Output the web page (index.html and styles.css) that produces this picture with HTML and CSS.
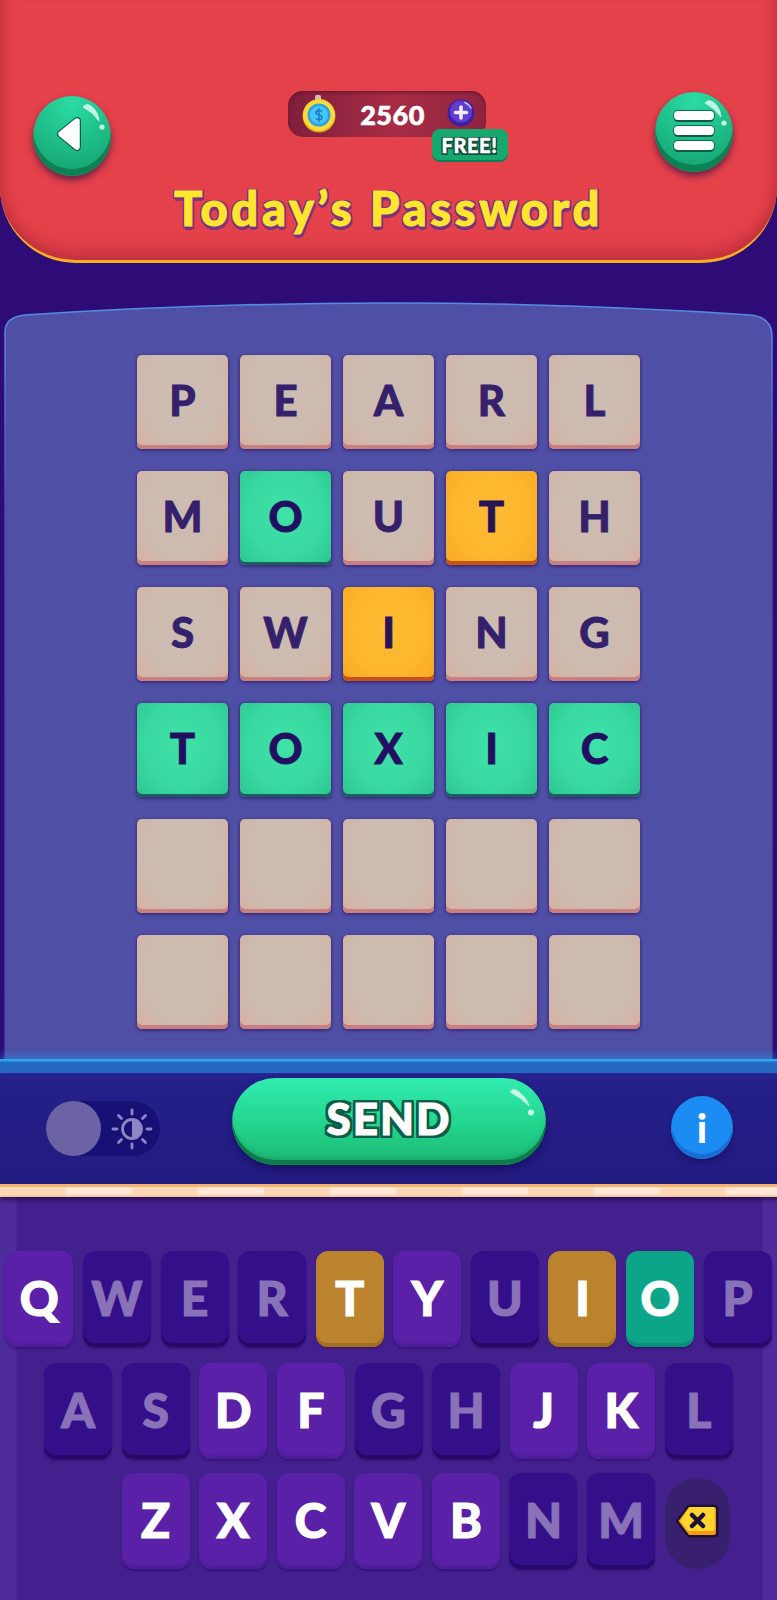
FILE: index.html
```html
<!DOCTYPE html>
<html lang="en">
<head>
<meta charset="utf-8">
<title>Today's Password</title>
<link rel="stylesheet" href="styles.css">
</head>
<body>
<div class="app">
  <header class="header">
    <div class="header-row">
      <button class="round-btn back">
        <svg class="shine" viewBox="0 0 78 78"><path d="M50 11 Q53 7 58 10 Q65 15 66 25 Q60 16 50 11Z" fill="#c4f5e4" stroke="#c4f5e4" stroke-linejoin="round"/><circle cx="69" cy="31" r="2.600" fill="#c4f5e4"/></svg>
        <svg class="shine" viewBox="0 0 78 78"><path d="M44 25 L28 38 L44 51 Z" fill="#fff" stroke="#0f5f4c" stroke-width="8" stroke-linejoin="round"/><path d="M44 25 L28 38 L44 51 Z" fill="#fff" stroke="#fff" stroke-width="5.500" stroke-linejoin="round"/></svg>
      </button>
      <div class="coins">
        <svg class="coin" viewBox="0 0 34 38" width="34" height="38"><rect x="13" y="0" width="6" height="5" rx="1.500" fill="#d9b9b0"/><circle cx="17" cy="21" r="16.500" fill="#d9a512"/><circle cx="17" cy="20" r="16" fill="#ffd83a"/><circle cx="17" cy="20" r="11.500" fill="#2fa4e4"/><circle cx="17" cy="20" r="9" fill="#46c6f6"/><path d="M20 16.500c-2-1.500-6-1.200-6 1.200 0 3 6 1.800 6 4.700 0 2.500-4 2.600-6.300 1.200M17 13v14" fill="none" stroke="#1b7fc4" stroke-width="1.600"/></svg>
        <span class="coin-count">2560</span>
        <svg class="plus" viewBox="0 0 28 28" width="28" height="28"><circle cx="14" cy="14" r="13.500" fill="#3f1fa6"/><circle cx="14" cy="12.500" r="11" fill="#5f3ed0"/><path d="M14 8v11M8.500 13.500h11" stroke="#f2eeff" stroke-width="3.500" stroke-linecap="round"/><path d="M18 3.500 Q22 5 24 9" fill="none" stroke="#cfc4f5" stroke-width="1.500" stroke-linecap="round"/></svg>
        <span class="free">FREE!</span>
      </div>
      <button class="round-btn menu">
        <svg class="shine" viewBox="0 0 78 78"><path d="M50 11 Q53 7 58 10 Q65 15 66 25 Q60 16 50 11Z" fill="#c4f5e4" stroke="#c4f5e4" stroke-linejoin="round"/><circle cx="69" cy="31" r="2.600" fill="#c4f5e4"/></svg>
        <span class="bars"><i></i><i></i><i></i></span>
      </button>
    </div>
    <h1 class="title">Today’s Password</h1>
  </header>

  <main class="board">
    <svg class="board-bg" viewBox="0 0 777 770" preserveAspectRatio="none">
      <defs><linearGradient id="edge" gradientUnits="userSpaceOnUse" x1="0" y1="0" x2="0" y2="770"><stop offset="0" stop-color="#4f93e6"/><stop offset=".08" stop-color="#5a7fd8"/><stop offset=".3" stop-color="#4a4a9e"/><stop offset="1" stop-color="#474795"/></linearGradient></defs>
      <path d="M5 770 V42 Q5 27 25 25 Q390 1 750 25 Q772 27 772 46 V770" fill="#4f4fa5" stroke="url(#edge)" stroke-width="1.500"/>
    </svg>
    <div class="grid">
      <div class="tile">P</div><div class="tile">E</div><div class="tile">A</div><div class="tile">R</div><div class="tile">L</div>
      <div class="tile">M</div><div class="tile green">O</div><div class="tile">U</div><div class="tile orange">T</div><div class="tile">H</div>
      <div class="tile">S</div><div class="tile">W</div><div class="tile orange">I</div><div class="tile">N</div><div class="tile">G</div>
      <div class="tile green">T</div><div class="tile green">O</div><div class="tile green">X</div><div class="tile green">I</div><div class="tile green">C</div>
      <div class="tile"></div><div class="tile"></div><div class="tile"></div><div class="tile"></div><div class="tile"></div>
      <div class="tile"></div><div class="tile"></div><div class="tile"></div><div class="tile"></div><div class="tile"></div>
    </div>
  </main>

  <section class="actions">
    <div class="toggle">
      <span class="knob"></span>
      <svg class="sun" viewBox="0 0 42 42" width="42" height="42"><g stroke="#8d87c4" stroke-width="2.800" stroke-linecap="round"><path d="M21 2v4M21 36v4M2 21h4M36 21h4M7.500 7.500l3 3M31.500 31.500l3 3M7.500 34.500l3-3M31.500 10.500l3-3"/></g><circle cx="21" cy="21" r="9.500" fill="none" stroke="#8d87c4" stroke-width="2.800"/><path d="M21 11.500a9.500 9.500 0 0 1 0 19z" fill="#8d87c4"/></svg>
    </div>
    <button class="send">
      <span class="send-label">SEND</span>
      <svg class="send-shine" viewBox="0 0 26 28" width="26" height="28"><path d="M1 4 Q3 0 7 2 Q17 8 20 18 Q13 10 1 4Z" fill="#c8f8e8" stroke="#c8f8e8" stroke-linejoin="round"/><circle cx="22" cy="24.500" r="3" fill="#c8f8e8"/></svg>
    </button>
    <button class="info">i</button>
  </section>

  <div class="strip"></div>

  <section class="keyboard">
    <div class="row">
      <div class="key lit">Q</div><div class="key off">W</div><div class="key off">E</div><div class="key off">R</div><div class="key amber">T</div><div class="key lit">Y</div><div class="key off">U</div><div class="key amber">I</div><div class="key teal">O</div><div class="key off">P</div>
    </div>
    <div class="row">
      <div class="key off">A</div><div class="key off">S</div><div class="key lit">D</div><div class="key lit">F</div><div class="key off">G</div><div class="key off">H</div><div class="key lit">J</div><div class="key lit">K</div><div class="key off">L</div>
    </div>
    <div class="row row-last">
      <div class="key lit">Z</div><div class="key lit">X</div><div class="key lit">C</div><div class="key lit">V</div><div class="key lit">B</div><div class="key off">N</div><div class="key off">M</div>
      <div class="del">
        <svg viewBox="0 0 44 34" width="44" height="34"><path d="M13 1 H40 Q43 1 43 4 V30 Q43 33 40 33 H13 L1 17 Z" fill="#1d1236" stroke="#1d1236" stroke-linejoin="round"/><path d="M14 3 H39 Q41 3 41 5 V29 Q41 31 39 31 H14 L3.500 17 Z" fill="#f59a16"/><path d="M14.500 3 H38 Q39.500 3 39.500 5 V25 Q39.500 27 37.500 27 H13 L5 17 Z" fill="#ffd530"/><path d="M17 11 L28 22 M28 11 L17 22" stroke="#1d1236" stroke-width="4.500" stroke-linecap="round"/></svg>
      </div>
    </div>
  </section>
</div>
</body>
</html>
```
FILE: styles.css
```css
* { box-sizing: border-box; margin: 0; padding: 0; }
html, body { width: 777px; height: 1600px; overflow: hidden; }
body { background: #2e0c78; font-family: Lato, "Open Sans", sans-serif; }
button { border: 0; background: none; font-family: inherit; }
.app { width: 777px; height: 1600px; display: flex; flex-direction: column; }

.header {
  height: 263px; padding: 92px 44px 0 33px; flex: none;
  background: #e5414a;
  border-bottom: 3px solid #f8b020;
  border-radius: 0 0 76px 76px;
  box-shadow: inset 0 -20px 20px -14px rgba(120, 20, 40, .4), inset 14px 0 14px -12px rgba(120, 20, 40, .3), inset -14px 0 14px -12px rgba(120, 20, 40, .3);
  position: relative;
}
.header-row { display: flex; justify-content: space-between; align-items: flex-start; }
.round-btn {
  position: relative; width: 78px; height: 80px; border-radius: 50%; flex: none;
  background: radial-gradient(circle at 50% 10%, #2bdca4 0, #1fc08a 45%, #18a878 80%);
  box-shadow: inset 0 -7px 0 #0c8152, 0 4px 7px rgba(60, 20, 70, .75);
  display: flex; align-items: center; justify-content: center;
}
.shine { position: absolute; left: 0; top: 0; width: 78px; height: 78px; }
.back { margin-top: 4px; }
.bars { display: flex; flex-direction: column; gap: 6px; margin-top: -3px; }
.bars i { display: block; width: 40px; height: 9px; background: #fff; border-radius: 4px; box-shadow: 0 2px 0 #0d5a45, 0 0 0 1px #0e6a50; }

.coins {
  position: relative; width: 198px; height: 46px; margin-left: 7px; margin-top: -1px;
  display: flex; align-items: center;
  background: linear-gradient(90deg, #7f1f3d, #a82c45 55%, #8e2440);
  box-shadow: inset 0 2px 3px rgba(90, 15, 40, .6);
  border-radius: 15px;
  padding-left: 14px;
}
.coin { flex: none; margin-top: -1px; }
.coin-count { width: 110px; margin-left: 2px; text-align: center; color: #fff; font-size: 27px; font-weight: 900; letter-spacing: .5px; -webkit-text-stroke: .6px #fff; }
.plus { flex: none; margin-top: -2px; margin-left: -1px; }
.free {
  position: absolute; left: 144px; top: 38px; width: 76px; height: 31px;
  display: flex; align-items: center; justify-content: center;
  background: #16a86e; border-radius: 8px; box-shadow: 0 2px 0 #0e7f58;
  color: #fff; font-size: 20px; font-weight: 900; letter-spacing: .6px;
  -webkit-text-stroke: .4px #fff;
  text-shadow: 1.500px 1.500px 0 #0c4a3a, -1.500px 1.500px 0 #0c4a3a, 1.500px -1.500px 0 #0c4a3a, -1.500px -1.500px 0 #0c4a3a;
}
.title {
  margin: 5px 0 0 11px; text-align: center;
  color: #ffe52e; font-size: 47px; line-height: 54px; font-weight: 900; letter-spacing: 3.700px;
  -webkit-text-stroke: 1px #ffe52e;
  text-shadow: 2px 3px 0 #7b3380, -2px 2px 0 #7b3380, 2px -1px 0 #7b3380, -2px -1px 0 #7b3380, 0 4px 0 #7b3380;
}

.board { position: relative; height: 796px; padding-top: 92px; flex: none; }
.board-bg { position: absolute; left: 0; top: 27px; width: 777px; height: 770px; }
.grid {
  position: relative;
  display: grid; grid-template-columns: repeat(5, 91px); grid-auto-rows: 94px;
  column-gap: 12px; row-gap: 22px; justify-content: center;
}
.tile {
  display: flex; align-items: center; justify-content: center;
  border-radius: 5px;
  background: radial-gradient(ellipse at 50% 40%, #cdbcb1 0, #cdbbb0 60%, #d6b0a0 100%);
  box-shadow: inset 0 -4px 0 #c97f80, 0 1px 3px 1px rgba(50, 25, 100, .6);
  color: #35206b; font-size: 42px; font-weight: 900; padding-bottom: 4px;
  -webkit-text-stroke: .8px currentColor;
}
.tile.green {
  background: radial-gradient(ellipse at 50% 45%, #40e2a8 0, #38d8a0 60%, #2fc592 100%);
  box-shadow: inset 0 -3px 0 #1d5e63, 0 1px 3px 1px rgba(40, 20, 90, .6);
  color: #220f62;
}
.tile.orange {
  background: radial-gradient(ellipse at 50% 45%, #ffbb33 0, #fdb62e 60%, #f7a921 100%);
  box-shadow: inset 0 -4px 0 #c9521a, 0 1px 3px 1px rgba(40, 20, 90, .6);
  color: #2a1258;
}

.actions {
  position: relative; height: 125px; flex: none;
  padding: 19px 44px 0 46px;
  background: linear-gradient(#2b2ea8, #25208a 16%, #221b80);
  display: flex; align-items: flex-start;
}
.actions::before {
  content: ""; position: absolute; left: 0; right: 0; top: 0; height: 14px;
  background: linear-gradient(#2aa8f5 0, #2aa8f5 2px, #2468c0 3px, #2468c0 100%);
  box-shadow: 0 -5px 7px rgba(40, 150, 240, .4);
}
.toggle {
  position: relative; width: 114px; height: 55px; margin-top: 23px; flex: none;
  background: #171175; border-radius: 28px;
  display: flex; align-items: center; justify-content: flex-end; padding-right: 7px;
}
.knob { position: absolute; left: 0; top: 0; width: 55px; height: 55px; border-radius: 50%; background: #6c63a5; }
.send {
  position: relative; width: 314px; height: 87px; margin-left: 72px; border-radius: 44px; flex: none;
  background: linear-gradient(#31ecb0, #22d48c 55%, #1db873);
  box-shadow: inset 0 -5px 0 #0f7a4a, inset 0 -9px 6px -3px rgba(10, 120, 80, .4), 0 4px 6px rgba(15, 10, 80, .6);
  display: flex; align-items: center; justify-content: center;
}
.send-label {
  color: #fff; font-size: 44px; font-weight: 900; letter-spacing: 2px; margin-top: -7px;
  -webkit-text-stroke: 1px #fff;
  text-shadow: 3px 0 0 #0b5d47, -3px 0 0 #0b5d47, 0 3px 0 #0b5d47, 0 -3px 0 #0b5d47, 3px 3px 0 #0b5d47, -3px 3px 0 #0b5d47, 3px -3px 0 #0b5d47, -3px -3px 0 #0b5d47;
}
.send-shine { position: absolute; right: 11px; top: 10px; }
.info {
  width: 62px; height: 63px; margin: 18px 0 0 auto; border-radius: 50%; flex: none;
  background: #1c8cf5; box-shadow: inset 0 -5px 0 #1a6ed2, 0 3px 5px rgba(15, 10, 80, .5);
  color: #fff; font-size: 40px; font-weight: 900; line-height: 58px; text-align: center;
}
.strip {
  height: 13px; flex: none;
  background: repeating-linear-gradient(90deg, #fdd9b8 0, #fdd9b8 66px, #ffe9d6 66px, #ffe9d6 132px);
  box-shadow: inset 0 3px 0 #f6b273, inset 0 -2px 0 #f6c9a0, 0 3px 4px rgba(30, 5, 60, .7);
  position: relative;
}
.keyboard {
  flex: 1; padding: 54px 0 0 0;
  background: linear-gradient(90deg, #4e2c9b 0, #4e2c9b 16px, #44208f 17px, #44208f 762px, #4e2c9b 763px);
  display: flex; flex-direction: column; gap: 16px;
}
.row { display: flex; justify-content: center; gap: 9.600px; }
.row-last { justify-content: flex-start; padding-left: 121.500px; margin-top: -2px; }
.key {
  width: 68px; height: 96px; border-radius: 12px; flex: none;
  display: flex; align-items: center; justify-content: center;
  font-size: 48px; font-weight: 900; padding-bottom: 4px;
  -webkit-text-stroke: 1.200px currentColor;
}
.key.lit { background: #5a21a8; color: #fff; box-shadow: inset 0 -4px 0 #4f1e9a, 0 2px 2px rgba(35, 10, 95, .5); }
.key.off { background: #33108a; color: #8a72b8; box-shadow: inset 0 -4px 0 #260a6a, 0 2px 2px rgba(35, 10, 95, .5); }
.key.amber { background: #bc832e; color: #fff; box-shadow: inset 0 -4px 0 #a06f22, 0 2px 2px rgba(60, 20, 80, .5); }
.key.teal { background: #0ca58a; color: #fff; box-shadow: inset 0 -4px 0 #0a8f78, 0 2px 2px rgba(35, 10, 95, .5); }
.del {
  width: 65px; height: 91px; margin-top: 5px; border-radius: 33px; flex: none; padding-bottom: 5px;
  background: #38206f;
  display: flex; align-items: center; justify-content: center;
}
```
